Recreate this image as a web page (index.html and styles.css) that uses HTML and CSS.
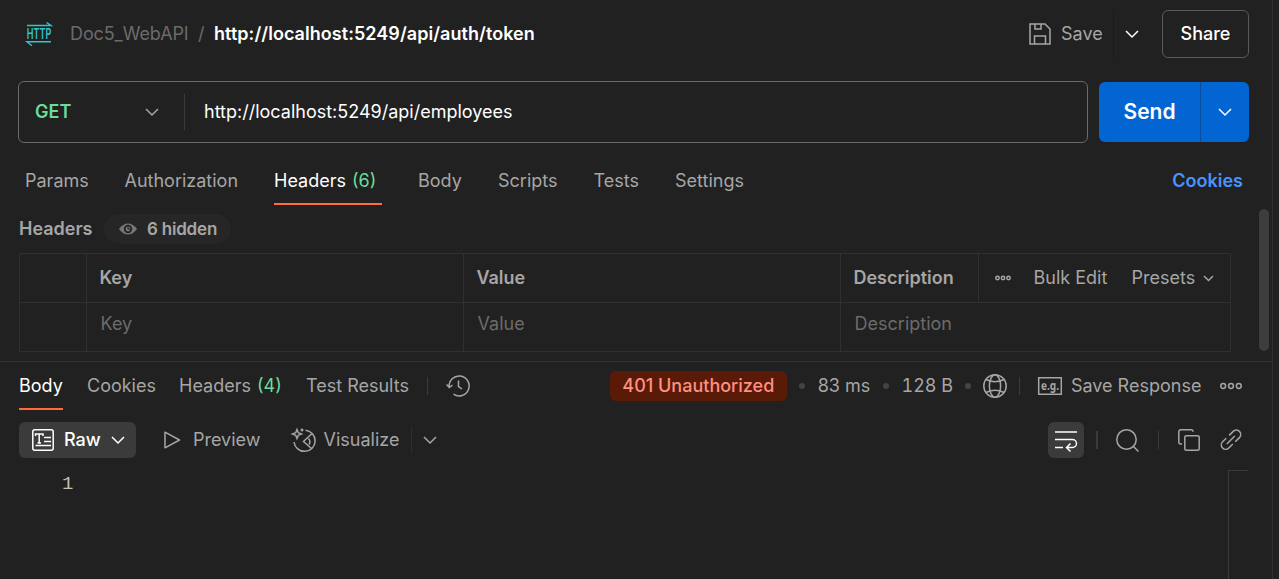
FILE: index.html
```html
<!DOCTYPE html>
<html lang="en">
<head>
<meta charset="utf-8">
<title>Doc5_WebAPI</title>
<link rel="stylesheet" href="styles.css">
</head>
<body>
<div class="app">
  <header class="topbar">
    <svg class="http-icon" width="26" height="26" viewBox="0 0 26 26"><path d="M1 4.500h24L20.500 1.500M25 20.800H1l5 4" fill="none" stroke="#35c4d4" stroke-width="1.400"/><text x=".8" y="17.800" textLength="24.500" lengthAdjust="spacingAndGlyphs">HTTP</text></svg>
    <div class="crumbs"><span class="collection">Doc5_WebAPI</span><span class="slash">/</span><span class="request-name">http://localhost:5249/api/auth/token</span></div>
    <button class="save">
      <svg width="22" height="22" viewBox="0 0 22 22" class="line"><path d="M1 1h15l5 5v15H1zM6 1v5h6V1M5.500 21v-8h11v8"/></svg>
      <span>Save</span>
    </button>
    <button class="save-more"><svg width="14" height="8" viewBox="0 0 14 8" class="line bright"><path d="M1 1l6 6 6-6"/></svg></button>
    <button class="share">Share</button>
  </header>

  <section class="request">
    <div class="url-box">
      <div class="method"><span>GET</span><svg width="14" height="8" viewBox="0 0 14 8" class="line"><path d="M1 1l6 6 6-6"/></svg></div>
      <div class="url">http://localhost:5249/api/employees</div>
    </div>
    <div class="send"><button class="send-main">Send</button><button class="send-more"><svg width="14" height="8" viewBox="0 0 14 8" class="line bright"><path d="M1 1l6 6 6-6"/></svg></button></div>
  </section>

  <nav class="tabs">
    <span>Params</span><span>Authorization</span><span class="active">Headers <i>(6)</i></span><span>Body</span><span>Scripts</span><span>Tests</span><span>Settings</span><a class="cookies">Cookies</a>
  </nav>

  <section class="headers-pane">
    <div class="headers-title">
      <b>Headers</b>
      <div class="pill"><svg width="18" height="12" viewBox="0 0 18 12"><path d="M0 6Q4 .5 9 .5T18 6Q14 11.500 9 11.500T0 6z" fill="#777"/><circle cx="9" cy="6" r="4.200" fill="#252525"/><circle cx="9" cy="6" r="2.400" fill="#777"/><path d="M9 3.500v2.500h2.500" fill="none" stroke="#252525"/></svg><span>6 hidden</span></div>
    </div>
    <div class="table">
      <div class="row head">
        <div></div><div>Key</div><div>Value</div><div>Description</div>
        <div class="tools"><svg width="16" height="6" viewBox="0 0 16 6" class="line"><circle cx="2.500" cy="3" r="1.700"/><circle cx="8" cy="3" r="1.700"/><circle cx="13.500" cy="3" r="1.700"/></svg><span class="bulk">Bulk Edit</span><span class="presets">Presets</span><svg width="11" height="7" viewBox="0 0 11 7" class="line"><path d="M1 1l4.500 4.500L10 1"/></svg></div>
      </div>
      <div class="row entry"><div></div><div>Key</div><div>Value</div><div class="wide">Description</div></div>
    </div>
    <div class="scrollbar"></div>
  </section>

  <section class="response">
    <div class="resp-bar">
      <nav class="resp-tabs"><span class="active">Body</span><span>Cookies</span><span>Headers <i>(4)</i></span><span>Test Results</span></nav>
      <div class="history"><svg width="24" height="22" viewBox="0 0 24 22" class="line"><path d="M3.200 12A10 10 0 1 1 7.500 19.200M.6 9.500l2.700 3 3.200-2.500M12.500 5.500v6l3.500 2.500"/></svg></div>
      <div class="meta">
        <span class="status">401 Unauthorized</span><i class="dot"></i><span class="time">83 ms</span><i class="dot"></i><span class="size">128 B</span><i class="dot"></i>
        <svg class="line globe" width="24" height="24" viewBox="0 0 24 24"><circle cx="12" cy="12" r="11.200"/><ellipse cx="12" cy="12" rx="5.600" ry="11.200"/><path d="M3 5.500q9 4.500 18 0M3 18.500q9-4.500 18 0"/></svg>
        <div class="save-response"><svg width="24" height="18" viewBox="0 0 24 18" class="line"><path d="M.7.7h22.600v16.600H.7z"/><text x="3" y="12.500" textLength="18" lengthAdjust="spacingAndGlyphs">e.g.</text></svg><span>Save Response</span></div>
        <svg width="22" height="8" viewBox="0 0 22 8" class="line"><circle cx="3.200" cy="4" r="2.400"/><circle cx="11" cy="4" r="2.400"/><circle cx="18.800" cy="4" r="2.400"/></svg>
      </div>
    </div>
    <div class="view-bar">
      <button class="raw"><svg width="22" height="22" viewBox="0 0 22 22" class="line bright"><rect x=".8" y=".8" width="20.400" height="20.400" rx="2"/><path d="M3.500 7V5h7.500v2M7.200 5v9M5.500 14h3.500M12 8.500h7M12 12.500h7M3.500 16.500H19"/></svg><span>Raw</span><svg width="14" height="8" viewBox="0 0 14 8" class="line bright"><path d="M1 1l6 6 6-6"/></svg></button>
      <button class="preview"><svg width="17" height="18" viewBox="0 0 17 18" class="line"><path d="M1 1.200v15.600L15.500 9z" stroke-linejoin="round"/></svg><span>Preview</span></button>
      <button class="visualize"><svg width="24" height="24" viewBox="0 0 24 24" class="line"><path d="M13.500 2.200A10.600 10.600 0 1 1 2 14M20 5.500l-8.500 8 8 7M16.500 10.500q2.500 3 .5 6M5 1.500l1.300 3.200L9.500 6 6.300 7.300 5 10.500 3.700 7.300.5 6l3.200-1.300zM10 .5v3M8.500 2h3"/></svg><span>Visualize</span></button>
      <button class="view-more"><svg width="14" height="8" viewBox="0 0 14 8" class="line"><path d="M1 1l6 6 6-6"/></svg></button>
      <div class="actions">
        <button class="wrap"><svg width="24" height="24" viewBox="0 0 24 24" class="line bright"><path d="M1 4h22M1 11.500h17.500a4 4 0 0 1 0 8H13M1 19.500h8M16.500 15.500l-4 4 4 4"/></svg></button>
        <i class="sep wide-sep"></i>
        <svg class="line search" width="23" height="23" viewBox="0 0 23 23"><circle cx="10.500" cy="10.500" r="9.700"/><path d="M17.500 17.500l5 5"/></svg>
        <i class="sep"></i>
        <svg class="line copy" width="22" height="22" viewBox="0 0 22 22"><path d="M4 15H2.800a2 2 0 0 1-2-2V2.800a2 2 0 0 1 2-2H13a2 2 0 0 1 2 2"/><rect x="6.800" y="6.800" width="14.400" height="14.400" rx="1.500"/></svg>
        <svg class="line link" width="22" height="22" viewBox="0 0 22 22"><path d="M9.200 6.400l4-4a4.300 4.300 0 0 1 6.200 6.200l-4.200 4.200M6.200 9.200l-3.600 3.600a4.300 4.300 0 0 0 6.200 6.200l4-4M6.800 15l8-8"/></svg>
      </div>
    </div>
    <div class="editor"><span class="line-no">1</span><div class="minimap"></div></div>
  </section>
</div>
</body>
</html>
```
FILE: styles.css
```css
* { box-sizing: border-box; }
body {
  margin: 0;
  background: #212121;
  color: #a6a6a6;
  font: 18px/24px Inter, "Liberation Sans", sans-serif;
  overflow: hidden;
}
svg { display: block; flex: none; overflow: visible; }
i { font-style: normal; }
button { font: inherit; color: inherit; background: none; border: 0; padding: 0; display: flex; align-items: center; flex: none; text-align: left; }
.line { fill: none; stroke: #a6a6a6; stroke-width: 1.5; }
.bright { stroke: #fff; }
span, a, b { white-space: nowrap; }

.app { width: 1273px; height: 579px; border-right: 1px solid #303030; display: flex; flex-direction: column; }

.topbar { display: flex; align-items: center; height: 48px; margin: 10px 23px 0 26px; }
.http-icon text { font: 600 14.5px Inter, sans-serif; fill: #35c4d4; }
.crumbs { display: flex; flex: 1; margin-left: 18px; }
.collection { color: #6b6b6b; width: 128px; letter-spacing: -.1px; }
.slash { color: #6b6b6b; width: 16px; }
.request-name { color: #fff; font-weight: 600; letter-spacing: .05px; }
.save { gap: 10px; width: 84px; }
.save-more { width: 49px; height: 48px; padding-left: 11px; border-left: 1px solid #1a1a1a; }
.share { width: 87px; height: 48px; justify-content: center; color: #fff; font-weight: 500; border: 1px solid #5a5a5a; border-radius: 6px; }

.request { display: flex; gap: 11px; align-items: center; margin: 23px 23px 0 18px; height: 62px; }
.url-box { width: 1070px; height: 62px; border: 1px solid #6b6b6b; border-radius: 6px; display: flex; align-items: center; }
.method { width: 166px; height: 36px; display: flex; align-items: center; justify-content: space-between; padding: 0 25px 0 16px; border-right: 1px solid #3b3b3b; color: #6bdd9a; font-weight: 600; }
.url { margin-left: 19px; color: #fff; }
.send { width: 150px; height: 60px; display: flex; background: #0265d2; border-radius: 6px; }
.send-main { width: 101px; justify-content: center; color: #fff; font-size: 21px; font-weight: 600; }
.send-more { width: 49px; justify-content: center; border-left: 1px solid #0a4f9e; }

.tabs { display: grid; grid-template-columns: 99.5px 149.5px 144px 80px 95.5px 81.5px 1fr auto; justify-items: start; height: 49px; margin: 13px 29px 0 25px; align-items: start; }
.tabs > * { height: 49px; padding-top: 13px; }
.tabs i, .resp-tabs i { color: #6bdd9a; margin-left: 1px; }
.active { color: #fff; border-bottom: 2px solid #ff6c37; }
.tabs .active { width: 108px; }
.cookies { color: #4794ff; font-weight: 600; }

.headers-pane { position: relative; height: 157px; border-bottom: 1px solid #303030; }
.headers-title { display: flex; align-items: center; gap: 12px; height: 30px; margin: 9px 0 0 19px; }
.headers-title b { font-weight: 600; width: 73px; }
.pill { display: flex; align-items: center; gap: 10px; width: 127px; height: 30px; padding-left: 15px; border-radius: 15px; background: #262626; font-size: 17px; font-weight: 600; letter-spacing: -.2px; }
.table { width: 1212px; margin: 9px 0 0 19px; border: 1px solid #303030; }
.row { display: grid; grid-template-columns: 67px 377px 377px 138px 1fr; height: 48px; align-items: stretch; }
.row > div { display: flex; align-items: center; padding-left: 12.4px; border-right: 1px solid #303030; }
.row > div:last-child { border-right: 0; }
.head { font-weight: 600; height: 49px; border-bottom: 1px solid #303030; }
.tools { font-weight: 400; }
.row > .tools { padding-left: 16px; }
.bulk { width: 98px; margin-left: 22.5px; }
.presets { width: 71.5px; }
.entry { color: #6b6b6b; }
.entry > div { padding: 0 0 6px 13.6px; }
.wide { grid-column: span 2; }
.scrollbar { position: absolute; left: 1259px; top: 4px; width: 10px; height: 142px; border-radius: 5px; background: #3d3d3d; }

.response { flex: 1; display: flex; flex-direction: column; }
.resp-bar { display: flex; align-items: flex-start; height: 48px; margin: 0 30px 0 19px; }
.resp-tabs { display: grid; grid-template-columns: 68px 92px 127px 121px; justify-items: start; }
.resp-tabs > span { height: 48px; padding-top: 12px; }
.history { height: 18px; margin-top: 15px; border-left: 1px solid #3b3b3b; padding-left: 18px; display: flex; align-items: center; }
.meta { margin-left: auto; height: 48px; display: flex; align-items: center; width: 632px; }
.status { width: 177px; height: 30px; line-height: 30px; text-align: center; border-radius: 6px; background: #5a1a08; color: #ff9082; font-weight: 500; }
.dot { width: 6px; height: 6px; border-radius: 3px; background: #444; margin-left: 12px; flex: none; }
.time { width: 53px; margin-left: 13px; }
.size { width: 52px; margin-left: 13px; font-variant-numeric: tabular-nums; }
.globe { margin-left: 12px; }
.save-response { display: flex; align-items: center; height: 18px; margin-left: 12px; padding-left: 18px; border-left: 1px solid #3b3b3b; width: 201px; gap: 8.500px; }
.save-response text { font: 700 12px "Noto Sans", sans-serif; fill: #a6a6a6; stroke: none; }

.view-bar { display: flex; align-items: center; height: 36px; margin: 12px 30px 0 19px; }
.raw { width: 117px; height: 36px; background: #3b3b3b; border-radius: 6px; padding-left: 13px; color: #fff; font-weight: 500; }
.raw span { width: 47px; margin-left: 10px; }
.preview { margin-left: 28px; width: 128px; gap: 12px; }
.visualize { width: 119px; gap: 7.500px; }
.view-more { height: 24px; padding-left: 11px; border-left: 1px solid #303030; }
.actions { margin-left: auto; display: flex; align-items: center; width: 194px; }
.wrap { width: 36px; height: 36px; justify-content: center; background: #3b3b3b; border-radius: 6px; }
.sep { width: 1px; height: 18px; background: #3b3b3b; flex: none; }
.wide-sep { width: 2px; margin-left: 12px; }
.search { margin-left: 18px; margin-right: 19px; }
.copy { margin-left: 19px; }
.link { margin-left: 20px; }

.editor { flex: 1; display: flex; margin-top: 12px; }
.line-no { width: 1228px; padding: 2px 0 0 62px; font-family: "Liberation Mono", monospace; font-size: 19px; color: #c0c0b8; }
.minimap { width: 20px; border: solid #3b3b3b; border-width: 1px 0 0 1px; }
```
